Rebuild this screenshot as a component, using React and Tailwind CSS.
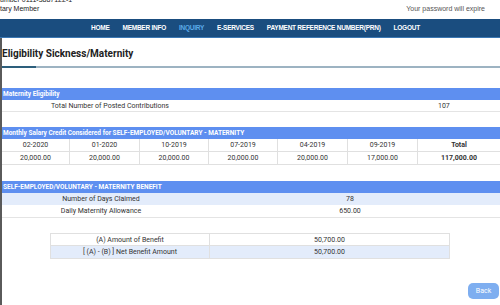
const months = ["02-2020", "01-2020", "10-2019", "07-2019", "04-2019", "09-2019"];
const amounts = ["20,000.00", "20,000.00", "20,000.00", "20,000.00", "20,000.00", "17,000.00"];

function SectionHeader({ children }) {
  return (
    <div className="h-[12px] bg-[#5e8ff0] pl-[1px] text-[6.5px] font-bold leading-[12px] text-white">
      {children}
    </div>
  );
}

export default function App() {
  return (
    <div className="relative h-[305px] w-[500px] overflow-hidden bg-white font-['Liberation_Sans',Arial,sans-serif] text-[#333]">
      <div className="flex h-[19px] justify-between text-[7px] leading-[9px]">
        <div className="-mt-[5px]">
          <div className="text-[#222]">umber 0111-3887122-1</div>
          <div className="text-[#222]">tary Member</div>
        </div>
        <div className="pr-[15px] pt-[4px] text-[#555]">Your password will expire</div>
      </div>

      <nav className="flex h-[19px] items-center gap-[13px] border-b border-[#3b78b4] bg-[#1a4d7f] pl-[91px] text-[6.5px] font-bold tracking-[-0.25px] text-white">
        <span>HOME</span>
        <span>MEMBER INFO</span>
        <span className="text-[#5aaae8]">INQUIRY</span>
        <span>E-SERVICES</span>
        <span>PAYMENT REFERENCE NUMBER(PRN)</span>
        <span>LOGOUT</span>
      </nav>

      <div className="h-[267px] border-l-2 border-[#5a5a5a] font-['Roboto',sans-serif] text-[7px]">
        <h1 className="pt-[9px] text-[10px] font-bold leading-[14px] text-[#222]">
          Eligibility Sickness/Maternity
        </h1>
        <div className="mt-[5px] flex h-[2px]">
          <div className="w-[34px] bg-[#2d5f7c]" />
          <div className="flex-1 bg-[#9db3c2]" />
        </div>

        <div className="mt-[20px]">
          <SectionHeader>Maternity Eligibility</SectionHeader>
          <div className="grid h-[12px] grid-cols-[216px_1fr] border-b border-[#e4e4e4] leading-[12px]">
            <div className="text-center">Total Number of Posted Contributions</div>
            <div className="pl-[220px]">107</div>
          </div>
        </div>

        <div className="mt-[15px]">
          <SectionHeader>Monthly Salary Credit Considered for SELF-EMPLOYED/VOLUNTARY - MATERNITY</SectionHeader>
          <div className="grid grid-cols-[68px_70px_69px_69px_70px_70px_1fr] leading-[13px]">
            {months.map((m) => (
              <div key={m} className="h-[13px] border-r border-b border-[#e0e0e0] text-center">
                {m}
              </div>
            ))}
            <div className="h-[13px] border-b border-[#e0e0e0] text-center font-bold">Total</div>
            {amounts.map((a, i) => (
              <div key={i} className="h-[13px] border-r border-b border-[#e0e0e0] text-center">
                {a}
              </div>
            ))}
            <div className="h-[13px] border-b border-[#e0e0e0] text-center font-bold">117,000.00</div>
          </div>
        </div>

        <div className="mt-[16px]">
          <SectionHeader>SELF-EMPLOYED/VOLUNTARY - MATERNITY BENEFIT</SectionHeader>
          <div className="grid grid-cols-[198px_1fr] leading-[12px]">
            <div className="h-[12px] bg-[#e3ecfb] text-center">Number of Days Claimed</div>
            <div className="h-[12px] bg-[#e3ecfb] text-center">78</div>
            <div className="h-[13px] border-b border-[#e4e4e4] text-center">Daily Maternity Allowance</div>
            <div className="h-[13px] border-b border-[#e4e4e4] text-center">650.00</div>
          </div>
        </div>

        <div className="ml-[48px] mt-[15px] w-[400px] border border-[#e0e0e0]">
          <div className="grid grid-cols-[159px_1fr] leading-[12px]">
            <div className="h-[12px] border-r border-b border-[#e0e0e0] text-center">(A) Amount of Benefit</div>
            <div className="h-[12px] border-b border-[#e0e0e0] text-center">50,700.00</div>
            <div className="h-[12px] border-r border-[#e0e0e0] bg-[#e3ecfb] text-center">[ (A) - (B) ] Net Benefit Amount</div>
            <div className="h-[12px] bg-[#e3ecfb] text-center">50,700.00</div>
          </div>
        </div>

        <div className="mt-[24px] flex justify-end pr-[1px]">
          <button className="h-[16px] w-[31px] rounded-[5px] bg-[#7eaef0] text-[7px] leading-[16px] text-white">
            Back
          </button>
        </div>
      </div>
    </div>
  );
}
